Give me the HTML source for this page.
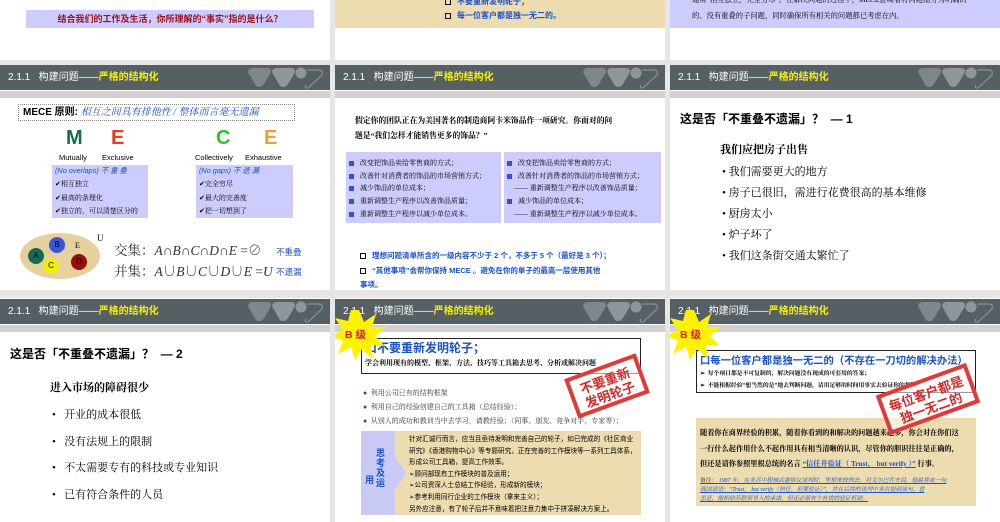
<!DOCTYPE html>
<html><head><meta charset="utf-8">
<style>
*{margin:0;padding:0;box-sizing:border-box}
body{width:1000px;height:522px;overflow:hidden;background:#e6e6e6;position:relative;font-family:"Liberation Sans","Noto Sans CJK SC",sans-serif}
.a{position:absolute}
.s{position:absolute;background:#fff;width:330px;overflow:hidden}
.hd{position:absolute;left:0;width:330px;height:25px;background:#566064;color:#fff;font-size:10px;line-height:25px;padding-left:8px;white-space:nowrap}
.hd b{color:#f4f000;font-weight:bold}
.gb{position:absolute;left:0;width:330px;height:8px;background:#d5d0d0;border-top:1px solid #fff}
.serif{font-family:"Liberation Serif","Noto Serif CJK SC",serif}
.t8{font-size:8px;white-space:nowrap}
.blue{color:#1a52c8}
.lav{background:#ccccff}
.tan{background:#ecdcb0}
.sq{display:inline-block;width:5px;height:5px;background:#3a4fd0;margin-right:6px;vertical-align:middle}
.box{display:inline-block;width:6px;height:6px;border:1.3px solid #111;margin-right:6px;vertical-align:middle}
.stamp{position:absolute;border:4px solid #e03a3a;color:#d42a2a;font-weight:bold;text-align:center;background:rgba(255,255,255,.55);transform:rotate(-20deg);white-space:nowrap}
.lg{position:absolute;opacity:.75}
</style></head><body>

<!-- ROW 1 partial -->
<div class="s" style="left:0;top:0;height:60px">
  <div class="a lav" style="left:26px;top:10px;width:288px;height:18px;color:#9b1020;font-size:9px;line-height:18px;text-align:center;font-weight:bold">结合我们的工作及生活，你所理解的“事实”指的是什么？</div>
</div>
<div class="s" style="left:335px;top:0;height:60px">
  <div class="a tan" style="left:0;top:0;width:330px;height:28px"></div>
  <div class="a blue t8" style="left:110px;top:-4px;font-weight:bold"><span class="box"></span>不要重新发明轮子；</div>
  <div class="a blue t8" style="left:110px;top:10px;font-weight:bold"><span class="box"></span>每一位客户都是独一无二的。</div>
</div>
<div class="s" style="left:670px;top:0;height:60px">
  <div class="a lav" style="left:0;top:0;width:330px;height:28px"></div>
  <div class="a serif" style="left:22px;top:-5px;font-size:7.3px;white-space:nowrap">通常“相互独立，完全穷尽”。在解决问题的过程中，MECE意味着将问题细分为明确的</div>
  <div class="a serif" style="left:22px;top:11px;font-size:7.3px;white-space:nowrap">的、没有重叠的子问题，同时确保所有相关的问题都已考虑在内。</div>
</div>

<!-- ROW 2 -->
<div class="s" style="left:0;top:65px;height:225px">
  <div class="hd" style="top:0">2.1.1&nbsp;&nbsp;&nbsp;构建问题——<b>严格的结构化</b></div>
  <div class="gb" style="top:25px"></div>
  <div class="a" style="left:18px;top:39px;width:277px;height:17px;border:1px dotted #888;font-size:10px;line-height:15px;padding-left:4px;font-weight:bold;white-space:nowrap">MECE 原则: <span class="blue serif" style="font-style:italic;font-weight:normal">相互之间具有排他性 / 整体而言毫无遗漏</span></div>
  <div class="a" style="left:66px;top:62px;font-size:20px;font-weight:bold;color:#17694f">M</div>
  <div class="a" style="left:111px;top:62px;font-size:20px;font-weight:bold;color:#e2401c">E</div>
  <div class="a" style="left:216px;top:62px;font-size:20px;font-weight:bold;color:#2cc22c">C</div>
  <div class="a" style="left:264px;top:62px;font-size:20px;font-weight:bold;color:#f0a030">E</div>
  <div class="a t8" style="left:59px;top:88px;font-size:7.5px">Mutually</div>
  <div class="a t8" style="left:102px;top:88px;font-size:7.5px">Exclusive</div>
  <div class="a t8" style="left:195px;top:88px;font-size:7.5px">Collectively</div>
  <div class="a t8" style="left:245px;top:88px;font-size:7.5px">Exhaustive</div>
  <div class="a lav" style="left:52px;top:100px;width:96px;height:53px"></div>
  <div class="a lav" style="left:196px;top:100px;width:97px;height:53px"></div>
  <div class="a blue" style="left:55px;top:101px;font-style:italic;font-size:7.3px;white-space:nowrap">(No overlaps) 不 重 叠</div>
  <div class="a serif" style="left:55px;top:114px;font-size:7px;white-space:nowrap">✔相互独立</div>
  <div class="a serif" style="left:55px;top:128px;font-size:7px;white-space:nowrap">✔最高的条理化</div>
  <div class="a serif" style="left:55px;top:141px;font-size:7px;white-space:nowrap">✔独立的，可以清楚区分的</div>
  <div class="a blue" style="left:199px;top:101px;font-style:italic;font-size:7.3px;white-space:nowrap">(No gaps) 不 遗 漏</div>
  <div class="a serif" style="left:199px;top:114px;font-size:7px;white-space:nowrap">✔完全穷尽</div>
  <div class="a serif" style="left:199px;top:128px;font-size:7px;white-space:nowrap">✔最大的完善度</div>
  <div class="a serif" style="left:199px;top:141px;font-size:7px;white-space:nowrap">✔把一切想到了</div>
  <div class="a" style="left:20px;top:168px;width:80px;height:46px;border-radius:50%;background:#e4d19c"></div>
  <div class="a" style="left:28px;top:183px;width:16px;height:16px;border-radius:50%;background:#17694f;font-size:8px;text-align:center;line-height:16px">A</div>
  <div class="a" style="left:49px;top:172px;width:16px;height:16px;border-radius:50%;background:#3a55dd;font-size:8px;text-align:center;line-height:16px">B</div>
  <div class="a" style="left:43px;top:193px;width:16px;height:16px;border-radius:50%;background:#f2ec10;font-size:8px;text-align:center;line-height:16px">C</div>
  <div class="a" style="left:71px;top:189px;width:16px;height:16px;border-radius:50%;background:#9a0c0c;font-size:8px;text-align:center;line-height:16px">D</div>
  <div class="a serif t8" style="left:75px;top:176px">E</div>
  <div class="a serif" style="left:97px;top:168px;font-size:9px">U</div>
  <div class="a serif" style="left:114px;top:174px;font-size:13.5px;white-space:nowrap;color:#333">交集：<i>A</i>∩<i>B</i>∩<i>C</i>∩<i>D</i>∩<i>E</i> =⊘</div>
  <div class="a serif" style="left:114px;top:195px;font-size:13.5px;white-space:nowrap;color:#333">并集：<i>A</i>∪<i>B</i>∪<i>C</i>∪<i>D</i>∪<i>E</i> =<i>U</i></div>
  <div class="a blue" style="left:276px;top:181px;font-size:8.5px;white-space:nowrap">不重叠</div>
  <div class="a blue" style="left:276px;top:201px;font-size:8.5px;white-space:nowrap">不遗漏</div>
</div>

<div class="s" style="left:335px;top:65px;height:225px">
  <div class="hd" style="top:0">2.1.1&nbsp;&nbsp;&nbsp;构建问题——<b>严格的结构化</b></div>
  <div class="gb" style="top:25px"></div>
  <div class="a serif" style="left:20px;top:50px;font-size:7.8px;white-space:nowrap;font-weight:bold">假定你的团队正在为美国著名的制造商阿卡米饰品作一项研究。你面对的问</div>
  <div class="a serif" style="left:20px;top:65px;font-size:7.8px;white-space:nowrap;font-weight:bold">题是“我们怎样才能销售更多的饰品？”</div>
  <div class="a lav" style="left:11px;top:87px;width:155px;height:71px"></div>
  <div class="a lav" style="left:169px;top:87px;width:157px;height:71px"></div>
  <div class="a serif" style="left:14px;top:92px;line-height:12.7px;font-size:7px;white-space:nowrap"><span class="sq"></span>改变把饰品卖给零售商的方式；<br><span class="sq"></span>改善针对消费者的饰品的市场营销方式；<br><span class="sq"></span>减少饰品的单位成本；<br><span class="sq"></span>重新调整生产程序以改善饰品质量；<br><span class="sq"></span>重新调整生产程序以减少单位成本。</div>
  <div class="a serif" style="left:172px;top:92px;line-height:12.7px;font-size:7px;white-space:nowrap"><span class="sq"></span>改变把饰品卖给零售商的方式；<br><span class="sq"></span>改善针对消费者的饰品的市场营销方式；<br>&nbsp;&nbsp;&nbsp;&nbsp;—— 重新调整生产程序以改善饰品质量；<br><span class="sq"></span>减少饰品的单位成本；<br>&nbsp;&nbsp;&nbsp;&nbsp;—— 重新调整生产程序以减少单位成本。</div>
  <div class="a blue" style="left:25px;top:185px;font-weight:bold;font-size:7.5px;white-space:nowrap"><span class="box"></span>理想问题清单所含的一级内容不少于 2 个，不多于 5 个（最好是 3 个）；</div>
  <div class="a blue" style="left:25px;top:200px;font-weight:bold;font-size:7.5px;white-space:nowrap"><span class="box"></span>“其他事项”会帮你保持 MECE 。避免在你的单子的最高一层使用其他</div>
  <div class="a blue" style="left:25px;top:214px;font-weight:bold;font-size:7.5px">事项。</div>
</div>

<div class="s" style="left:670px;top:65px;height:225px">
  <div class="hd" style="top:0">2.1.1&nbsp;&nbsp;&nbsp;构建问题——<b>严格的结构化</b></div>
  <div class="gb" style="top:25px"></div>
  <div class="a" style="left:10px;top:45px;font-size:12px;font-weight:bold;white-space:nowrap">这是否「不重叠不遗漏」？&nbsp;&nbsp;— 1</div>
  <div class="a serif" style="left:50px;top:76px;font-size:11px;font-weight:bold">我们应把房子出售</div>
  <div class="a serif" style="left:52px;top:97px;font-size:11px;line-height:21px;white-space:nowrap">•&nbsp;我们需要更大的地方<br>•&nbsp;房子已很旧，需进行花费很高的基本维修<br>•&nbsp;厨房太小<br>•&nbsp;炉子坏了<br>•&nbsp;我们这条街交通太繁忙了</div>
</div>

<!-- ROW 3 -->
<div class="s" style="left:0;top:298px;height:224px">
  <div class="hd" style="top:1px">2.1.1&nbsp;&nbsp;&nbsp;构建问题——<b>严格的结构化</b></div>
  <div class="gb" style="top:26px"></div>
  <div class="a" style="left:10px;top:47px;font-size:12px;font-weight:bold;white-space:nowrap">这是否「不重叠不遗漏」？&nbsp;&nbsp;— 2</div>
  <div class="a serif" style="left:50px;top:81px;font-size:11px;font-weight:bold">进入市场的障碍很少</div>
  <div class="a serif" style="left:52px;top:104px;font-size:11px;line-height:26.7px;white-space:nowrap">•&nbsp;&nbsp;&nbsp;开业的成本很低<br>•&nbsp;&nbsp;&nbsp;没有法规上的限制<br>•&nbsp;&nbsp;&nbsp;不太需要专有的科技或专业知识<br>•&nbsp;&nbsp;&nbsp;已有符合条件的人员</div>
</div>

<div class="s" style="left:335px;top:298px;height:224px">
  <div class="hd" style="top:1px">2.1.1&nbsp;&nbsp;&nbsp;构建问题——<b>严格的结构化</b></div>
  <div class="gb" style="top:26px"></div>
  <div class="a" style="left:26px;top:40px;width:280px;height:36px;border:1px solid #222"></div>
  <div class="a blue" style="left:30px;top:41px;font-size:12px;font-weight:bold;white-space:nowrap">口不要重新发明轮子；</div>
  <div class="a serif" style="left:30px;top:60px;font-size:7px;white-space:nowrap;font-weight:bold">学会利用现有的模型、框架、方法、技巧等工具箱去思考、分析或解决问题</div>
  <div class="a serif" style="left:28px;top:88px;line-height:14px;color:#333;font-size:7px;white-space:nowrap">
  <span style="color:#1c6d28">●</span>&nbsp;&nbsp;利用公司已有的结构框架<br><span style="color:#1c6d28">●</span>&nbsp;&nbsp;利用自己的经验创建自己的工具箱（总结经验）；<br><span style="color:#1c6d28">●</span>&nbsp;&nbsp;从别人的成功和教训当中去学习，请教经验；（同事、朋友、竞争对手、专家等）；</div>
  <div class="a tan" style="left:26px;top:133px;width:280px;height:84px"></div>
  <div class="a" style="left:26px;top:133px;width:45px;height:84px;background:#c9c9f5;clip-path:polygon(0 0,75% 0,75% 30%,100% 50%,75% 70%,75% 100%,0 100%)"></div>
  <div class="a blue" style="left:41px;top:150px;font-size:9px;font-weight:bold;line-height:10px;width:10px">思考及运</div>
  <div class="a blue" style="left:30px;top:175px;font-size:9px;font-weight:bold">用</div>
  <div class="a" style="left:74px;top:136px;line-height:11.6px;font-size:6.6px;white-space:nowrap">针对汇诚行而言，应当且亟待发明和完善自己的轮子，如已完成的《社区商业<br>研究》《香港购物中心》等专题研究，正在完善的工作模块等一系列工具体系，<br>形成公司工具箱，提高工作效率。<br>➢顾问部现有工作模块的普及运用；<br>➢公司资深人士总结工作经验，形成新的模块；<br>➢参考利用同行企业的工作模块（拿来主义）；<br>另外应注意，有了轮子后并不意味着把注意力集中于拼凑解决方案上。</div>
  <div class="stamp" style="left:234px;top:67px;width:76px;height:42px;font-size:13px;line-height:15px;padding-top:4px">不要重新<br>发明轮子</div>
  <svg class="a" style="left:-4px;top:12px" width="56" height="50" viewBox="0 0 56 50"><polygon fill="#fff200" points="28,0 33,12 45,4 41,17 55,17 44,26 54,36 40,35 42,49 31,39 24,50 20,37 7,44 12,31 0,26 12,20 4,8 17,11 20,0"/></svg>
  <div class="a" style="left:10px;top:29px;color:#d2222a;font-size:10.5px;font-weight:bold">B 级</div>
</div>

<div class="s" style="left:670px;top:298px;height:224px">
  <div class="hd" style="top:1px">2.1.1&nbsp;&nbsp;&nbsp;构建问题——<b>严格的结构化</b></div>
  <div class="gb" style="top:26px"></div>
  <div class="a" style="left:26px;top:52px;width:280px;height:43px;border:1px solid #222"></div>
  <div class="a blue" style="left:30px;top:54px;font-size:10.3px;font-weight:bold;white-space:nowrap">口每一位客户都是独一无二的（不存在一刀切的解决办法）</div>
  <div class="a serif" style="left:30px;top:70px;font-size:5.8px;line-height:12px;white-space:nowrap;font-weight:bold">➢&nbsp;&nbsp;每个项目都是不可复制的，解决问题没有现成的可套用的答案；<br>➢&nbsp;&nbsp;不能根据经验“想当然的是”地去判断问题，请用足够的时间用事实去验证你的判断</div>
  <div class="a tan" style="left:26px;top:120px;width:280px;height:88px"></div>
  <div class="a serif" style="left:30px;top:128px;font-size:7.2px;line-height:15.5px;white-space:nowrap;font-weight:bold">随着你在商界经验的积累，随着你看到的和解决的问题越来越多，你会对在你们这<br>一行什么起作用什么不起作用具有相当清晰的认识，尽管你的胆识往往是正确的，<br>但还是请你参照里根总统的名言 <span class="blue" style="text-decoration:underline">“信任并验证（ Trust， but verify ）”</span> 行事。</div>
  <div class="a serif blue" style="left:30px;top:179px;font-size:5.8px;line-height:9px;white-space:nowrap;font-style:italic;text-decoration:underline"><span style="color:#222;font-style:normal">备注：</span> 1987 年，在美苏中程核武器协议谈判时，里根常较例去，对戈尔巴乔夫说，他最喜欢一句<br>俄国谚语：“Trust， but verify（信任，但要验证）”，并在后续的谈判中多次提到该句，意<br>思是，他相信苏联领导人的承诺，但还必须有个有效的验证机制。</div>
  <div class="stamp" style="left:210px;top:80px;width:96px;height:42px;font-size:13px;line-height:15px;padding-top:4px">每位客户都是<br>独一无二的</div>
  <svg class="a" style="left:-4px;top:12px" width="56" height="50" viewBox="0 0 56 50"><polygon fill="#fff200" points="28,0 33,12 45,4 41,17 55,17 44,26 54,36 40,35 42,49 31,39 24,50 20,37 7,44 12,31 0,26 12,20 4,8 17,11 20,0"/></svg>
  <div class="a" style="left:10px;top:29px;color:#d2222a;font-size:10.5px;font-weight:bold">B 级</div>
</div>

<!-- logos -->
<svg class="lg" style="left:245px;top:66px" width="80" height="23" viewBox="0 0 80 23"><path d="M8 2h14c4 0 5 3 3 6l-6 10c-2 3-5 4-8 2L4 8C2 5 4 2 8 2z" fill="#8d9599"/><path d="M32 2h14c4 0 5 3 3 6l-6 10c-2 3-5 4-8 2L28 8C26 5 28 2 32 2z" fill="#a3a9ac"/><circle cx="56" cy="7" r="5.5" fill="#a3a9ac"/><path d="M62 4h12c4 0 4 4 2 6L64 21c-2 2-5 1-3-2" fill="none" stroke="#9aa0a3" stroke-width="1.2"/></svg>
<svg class="lg" style="left:580px;top:66px" width="80" height="23" viewBox="0 0 80 23"><path d="M8 2h14c4 0 5 3 3 6l-6 10c-2 3-5 4-8 2L4 8C2 5 4 2 8 2z" fill="#8d9599"/><path d="M32 2h14c4 0 5 3 3 6l-6 10c-2 3-5 4-8 2L28 8C26 5 28 2 32 2z" fill="#a3a9ac"/><circle cx="56" cy="7" r="5.5" fill="#a3a9ac"/><path d="M62 4h12c4 0 4 4 2 6L64 21c-2 2-5 1-3-2" fill="none" stroke="#9aa0a3" stroke-width="1.2"/></svg>
<svg class="lg" style="left:915px;top:66px" width="80" height="23" viewBox="0 0 80 23"><path d="M8 2h14c4 0 5 3 3 6l-6 10c-2 3-5 4-8 2L4 8C2 5 4 2 8 2z" fill="#8d9599"/><path d="M32 2h14c4 0 5 3 3 6l-6 10c-2 3-5 4-8 2L28 8C26 5 28 2 32 2z" fill="#a3a9ac"/><circle cx="56" cy="7" r="5.5" fill="#a3a9ac"/><path d="M62 4h12c4 0 4 4 2 6L64 21c-2 2-5 1-3-2" fill="none" stroke="#9aa0a3" stroke-width="1.2"/></svg>
<svg class="lg" style="left:245px;top:300px" width="80" height="23" viewBox="0 0 80 23"><path d="M8 2h14c4 0 5 3 3 6l-6 10c-2 3-5 4-8 2L4 8C2 5 4 2 8 2z" fill="#8d9599"/><path d="M32 2h14c4 0 5 3 3 6l-6 10c-2 3-5 4-8 2L28 8C26 5 28 2 32 2z" fill="#a3a9ac"/><circle cx="56" cy="7" r="5.5" fill="#a3a9ac"/><path d="M62 4h12c4 0 4 4 2 6L64 21c-2 2-5 1-3-2" fill="none" stroke="#9aa0a3" stroke-width="1.2"/></svg>
<svg class="lg" style="left:580px;top:300px" width="80" height="23" viewBox="0 0 80 23"><path d="M8 2h14c4 0 5 3 3 6l-6 10c-2 3-5 4-8 2L4 8C2 5 4 2 8 2z" fill="#8d9599"/><path d="M32 2h14c4 0 5 3 3 6l-6 10c-2 3-5 4-8 2L28 8C26 5 28 2 32 2z" fill="#a3a9ac"/><circle cx="56" cy="7" r="5.5" fill="#a3a9ac"/><path d="M62 4h12c4 0 4 4 2 6L64 21c-2 2-5 1-3-2" fill="none" stroke="#9aa0a3" stroke-width="1.2"/></svg>
<svg class="lg" style="left:915px;top:300px" width="80" height="23" viewBox="0 0 80 23"><path d="M8 2h14c4 0 5 3 3 6l-6 10c-2 3-5 4-8 2L4 8C2 5 4 2 8 2z" fill="#8d9599"/><path d="M32 2h14c4 0 5 3 3 6l-6 10c-2 3-5 4-8 2L28 8C26 5 28 2 32 2z" fill="#a3a9ac"/><circle cx="56" cy="7" r="5.5" fill="#a3a9ac"/><path d="M62 4h12c4 0 4 4 2 6L64 21c-2 2-5 1-3-2" fill="none" stroke="#9aa0a3" stroke-width="1.2"/></svg>
</body></html>
